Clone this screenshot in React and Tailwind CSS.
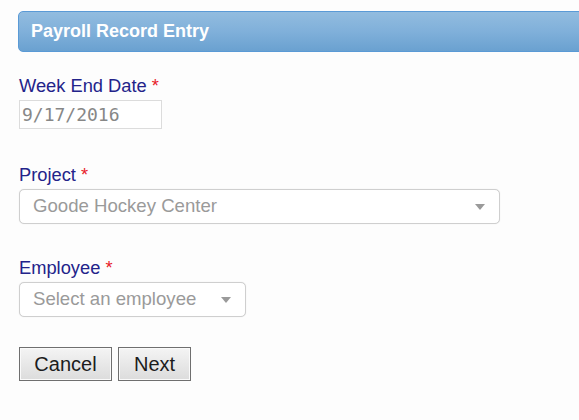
import React from 'react'

const Label = ({ children }) => (
  <label className="block h-[21px] leading-[21px] text-[18.3px] text-[#23238a]">
    {children} <span className="text-[#e8202a]">*</span>
  </label>
)

const Arrow = () => (
  <svg width="10" height="6" viewBox="0 0 10 6" className="shrink-0">
    <path d="M0 0 L10 0 L5 6 Z" fill="#9a9a9a" />
  </svg>
)

const Select = ({ text, width }) => (
  <div
    className={`mt-[4px] h-[35px] ${width} flex items-center justify-between pl-[13px] pr-[14px] border border-[#cfcfcf] rounded-[5px] bg-white shadow-[0_0_1px_rgba(0,0,0,0.15)] text-[18.6px] text-[#9a9a9a]`}
  >
    <span className="leading-none">{text}</span>
    <Arrow />
  </div>
)

const Button = ({ children, width }) => (
  <button
    className={`h-[34px] ${width} border border-[#6f6f6f] bg-gradient-to-b from-[#f4f4f4] to-[#dcdcdc] shadow-[inset_0_0_0_1px_#fafafa] text-[20px] text-[#1c1c1c] leading-none`}
  >
    {children}
  </button>
)

const App = () => {
  return (
    <div className="w-[579px] h-[420px] overflow-hidden bg-[#fdfdfd] pt-[11px] font-['Liberation_Sans',Arial,sans-serif]">
      <div className="ml-[18px] mr-[-12px] h-[41px] flex items-center pl-[12px] rounded-l-[5px] border border-[#5a9ad6] bg-gradient-to-b from-[#92bcdf] via-[#80b0da] to-[#6aa1d0] text-white font-bold text-[18px]">
        Payroll Record Entry
      </div>

      <div className="pl-[19px]">
        <div className="mt-[23px]">
          <Label>Week End Date</Label>
          <div className="mt-[4px] w-[143px] h-[29px] flex items-center pl-[2px] border border-[#dcdcdc] bg-white text-[18px] text-[#878787] font-['DejaVu_Sans_Mono',monospace] leading-none">
            9/17/2016
          </div>
        </div>

        <div className="mt-[35px]">
          <Label>Project</Label>
          <Select text="Goode Hockey Center" width="w-[481px]" />
        </div>

        <div className="mt-[33px]">
          <Label>Employee</Label>
          <Select text="Select an employee" width="w-[227px]" />
        </div>

        <div className="mt-[30px] flex gap-[6px]">
          <Button width="w-[93px]">Cancel</Button>
          <Button width="w-[73px]">Next</Button>
        </div>
      </div>
    </div>
  )
}

export default App
